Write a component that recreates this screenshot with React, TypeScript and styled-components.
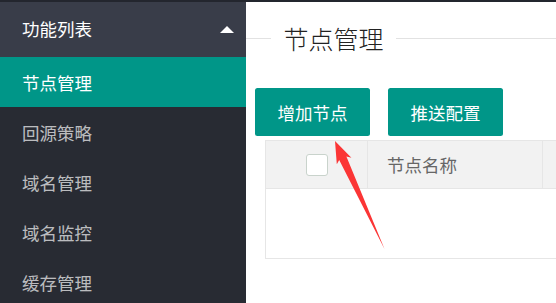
import React from 'react';
import styled, { createGlobalStyle } from 'styled-components';

const GlobalStyle = createGlobalStyle`
  html, body {
    margin: 0;
    padding: 0;
    background: #ffffff;
    overflow: hidden;
  }
  body {
    font-family: "Noto Sans CJK SC", "Noto Sans", sans-serif;
  }
`;

const menuItems = ['节点管理', '回源策略', '域名管理', '域名监控', '缓存管理'];

const App = () => {
  return (
    <>
      <GlobalStyle />
      <Page>
        <Sidebar>
          <MenuHeader>
            <span>功能列表</span>
            <Caret />
          </MenuHeader>
          {menuItems.map((item, i) => (
            <MenuItem key={item} active={i === 0}>
              {item}
            </MenuItem>
          ))}
        </Sidebar>

        <Main>
          <FieldTitle>
            <Legend>节点管理</Legend>
          </FieldTitle>

          <Toolbar>
            <Button>增加节点</Button>
            <Button>推送配置</Button>
          </Toolbar>

          <Table>
            <HeadRow>
              <Cell width={102} center>
                <Checkbox />
              </Cell>
              <Cell width={175}>节点名称</Cell>
              <Cell width={160} />
            </HeadRow>
            <EmptyRow />
          </Table>
        </Main>

        {/* red annotation arrow pointing at the add button */}
        <Arrow viewBox="0 0 556 303">
          <polygon
            points="335,141 351.4,157.7 346.4,156.6 384.5,249 339.2,160 336.8,164.3"
            fill="#fb3535"
          />
        </Arrow>
      </Page>
    </>
  );
};

const Page = styled.div`
  position: relative;
  display: flex;
  width: 556px;
  height: 303px;
  box-sizing: border-box;
  border-top: 2px solid #23262e;
  overflow: hidden;
`;

const Sidebar = styled.nav`
  width: 246px;
  flex-shrink: 0;
  background: #282b33;
  display: flex;
  flex-direction: column;
`;

const MenuHeader = styled.div`
  height: 55px;
  flex-shrink: 0;
  display: flex;
  align-items: center;
  justify-content: space-between;
  padding: 0 12px 2px 22px;
  box-sizing: border-box;
  background: #393d49;
  color: #ffffff;
  font-size: 17.5px;
`;

const Caret = styled.i`
  width: 0;
  height: 0;
  margin-top: 2px;
  border-left: 7px solid transparent;
  border-right: 7px solid transparent;
  border-bottom: 7px solid #ffffff;
`;

const MenuItem = styled.div<{ active?: boolean }>`
  height: 50px;
  flex-shrink: 0;
  display: flex;
  align-items: center;
  padding-left: 22px;
  font-size: 17.5px;
  color: ${(p) => (p.active ? '#ffffff' : 'rgba(255, 255, 255, 0.7)')};
  background: ${(p) => (p.active ? '#009688' : 'transparent')};
`;

const Main = styled.main`
  flex: 1;
  min-width: 0;
  overflow: hidden;
  padding-top: 20px;
`;

const FieldTitle = styled.div`
  height: 32px;
  display: flex;
  align-items: center;

  &::before,
  &::after {
    content: '';
    height: 1px;
    background: #e2e2e2;
  }
  &::before {
    width: 25px;
  }
  &::after {
    flex: 1;
  }
`;

const Legend = styled.span`
  padding: 0 12.5px;
  font-size: 25px;
  font-weight: 300;
  color: #222;
  line-height: 32px;
`;

const Toolbar = styled.div`
  display: flex;
  gap: 18px;
  margin-top: 34px;
  padding-left: 9px;
`;

const Button = styled.button`
  height: 48px;
  padding: 0 22.5px;
  border: none;
  border-radius: 2.5px;
  background: #009688;
  color: #ffffff;
  font-family: inherit;
  font-size: 17.5px;
  cursor: pointer;
`;

const Table = styled.div`
  margin: 4px 0 0 19px;
  width: 460px;
  border: 1px solid #e6e6e6;
  border-right: none;
`;

const HeadRow = styled.div`
  display: flex;
  height: 47px;
  background: #f2f2f2;
  border-bottom: 1px solid #e6e6e6;
`;

const Cell = styled.div<{ width: number; center?: boolean }>`
  width: ${(p) => p.width}px;
  flex-shrink: 0;
  display: flex;
  align-items: center;
  justify-content: ${(p) => (p.center ? 'center' : 'flex-start')};
  padding-left: ${(p) => (p.center ? 0 : 19)}px;
  box-sizing: border-box;
  border-right: 1px solid #e6e6e6;
  color: #666;
  font-size: 17.5px;
`;

const Checkbox = styled.span`
  width: 20px;
  height: 20px;
  border: 1px solid #c9d3cc;
  border-radius: 3px;
  background: #ffffff;
`;

const EmptyRow = styled.div`
  height: 69px;
  background: #ffffff;
`;

const Arrow = styled.svg`
  position: absolute;
  left: 0;
  top: -2px;
  width: 556px;
  height: 303px;
  pointer-events: none;
`;

export default App;
